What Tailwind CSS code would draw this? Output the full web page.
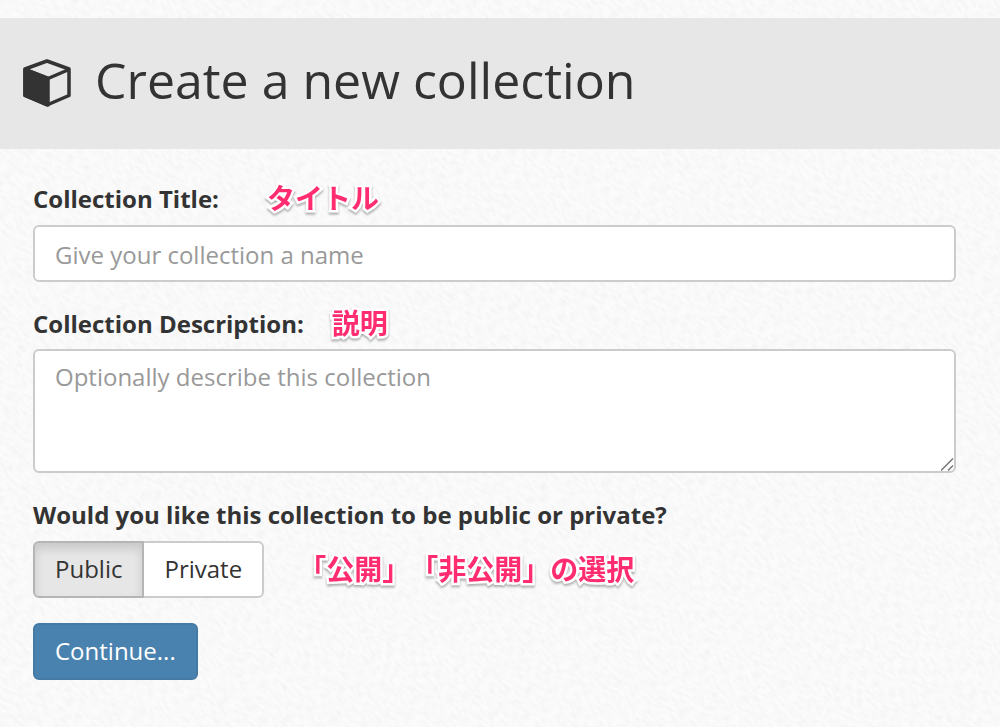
<!DOCTYPE html>
<html lang="en">
<head>
    <meta charset="UTF-8">
    <meta name="viewport" content="width=device-width, initial-scale=1.0">
    <title>Create a new collection</title>
    <script src="https://cdn.jsdelivr.net/npm/@tailwindcss/browser@4"></script>
</head>

<body class="relative min-h-screen overflow-x-hidden bg-[#fbfbfb] pt-[18px] font-['Open_Sans','Noto_Sans_CJK_JP',sans-serif] text-2xl text-[#333]">
    <!-- Paper texture -->
    <svg class="absolute inset-0 -z-10 h-full w-full" aria-hidden="true">
        <filter id="grain" x="0" y="0" width="100%" height="100%">
            <feTurbulence type="fractalNoise" baseFrequency="0.12 0.3" numOctaves="2" seed="4" />
            <feColorMatrix values="0 0 0 0 0.8  0 0 0 0 0.8  0 0 0 0 0.8  0.8 0 0 0 -0.3" />
        </filter>
        <g transform="rotate(45)">
            <rect x="0" y="-900" width="1500" height="1800" filter="url(#grain)" />
        </g>
    </svg>

    <!-- Header -->
    <header class="flex h-[131px] items-center gap-6 bg-[#e7e7e7] px-[23px] pb-0.5">
        <svg class="h-12 w-12 shrink-0" viewBox="0 0 48 48" fill="none" stroke="#333" stroke-width="3.500" stroke-linejoin="round" aria-hidden="true">
            <path d="M24 2 46 10V36.500L24 46 2 36.500V10Z" />
            <path d="M2 10.500 25 19.500 46 10.500" />
            <path d="M2 10.500 25 19.500V46L2 36.500Z" fill="#333" />
        </svg>
        <h1 class="pb-1.5 text-[50px] leading-[60px]">Create a new collection</h1>
    </header>

    <main class="pt-8 pr-11 pl-[33px]">
        <form>
            <!-- Title -->
            <div class="mb-6">
                <div class="mb-2 flex h-9 items-center gap-12">
                    <label for="title" class="font-bold">Collection Title:</label>
                    <span lang="ja" class="pb-0.5 text-[28px] leading-9 font-bold text-[#ff2d70] [paint-order:stroke_fill] [-webkit-text-stroke:5px_white] drop-shadow-[0_2px_1px_rgb(0_0_0/0.3)]">タイトル</span>
                </div>
                <input id="title" type="text" placeholder="Give your collection a name" class="block h-[57px] w-full rounded-md border-2 border-[#ccc] bg-white px-5 pt-0.5 placeholder:text-[#999]">
            </div>

            <!-- Description -->
            <div class="mb-6">
                <div class="mb-[7px] flex h-9 items-center gap-7">
                    <label for="description" class="font-bold">Collection Description:</label>
                    <span lang="ja" class="pb-0.5 text-[28px] leading-9 font-bold text-[#ff2d70] [paint-order:stroke_fill] [-webkit-text-stroke:5px_white] drop-shadow-[0_2px_1px_rgb(0_0_0/0.3)]">説明</span>
                </div>
                <div class="relative">
                    <textarea id="description" placeholder="Optionally describe this collection" class="block h-[124px] w-full resize-none rounded-md border-2 border-[#ccc] bg-white px-5 py-2.5 placeholder:text-[#999]"></textarea>
                    <!-- Resize grip -->
                    <svg class="pointer-events-none absolute right-[2px] bottom-[2px] h-[13px] w-[13px]" viewBox="0 0 13 13" stroke="#777" stroke-width="1.500" aria-hidden="true">
                        <path d="M0 12.500 12 0.500M7 12.500 12 7.500" />
                    </svg>
                </div>
            </div>

            <!-- Visibility -->
            <fieldset class="mb-[25px]">
                <legend class="mb-2 leading-9 font-bold">Would you like this collection to be public or private?</legend>
                <div class="flex items-center gap-[34px]">
                    <div class="flex h-[57px]">
                        <label class="flex items-center rounded-l-md border-2 border-[#ccc] bg-white px-5 pb-0.5 has-checked:border-[#b5b5b5] has-checked:bg-[#e6e6e6] has-checked:shadow-[inset_0_6px_10px_rgb(0_0_0/0.125)]">
                            <input type="radio" name="visibility" value="public" class="sr-only" checked>Public
                        </label>
                        <label class="flex items-center rounded-r-md border-2 border-l-0 border-[#ccc] bg-white px-5 pb-0.5 has-checked:border-[#b5b5b5] has-checked:bg-[#e6e6e6]">
                            <input type="radio" name="visibility" value="private" class="sr-only">Private
                        </label>
                    </div>
                    <span lang="ja" class="pb-0.5 text-[28px] leading-9 font-bold text-[#ff2d70] [paint-order:stroke_fill] [text-spacing-trim:space-all] [-webkit-text-stroke:5px_white] drop-shadow-[0_2px_1px_rgb(0_0_0/0.3)]">「公開」「非公開」の選択</span>
                </div>
            </fieldset>

            <button type="submit" class="h-[57px] rounded-md border-2 border-[#457aa5] bg-[#4a82af] px-5 pb-0.5 text-white">Continue...</button>
        </form>
    </main>
</body>
</html>
